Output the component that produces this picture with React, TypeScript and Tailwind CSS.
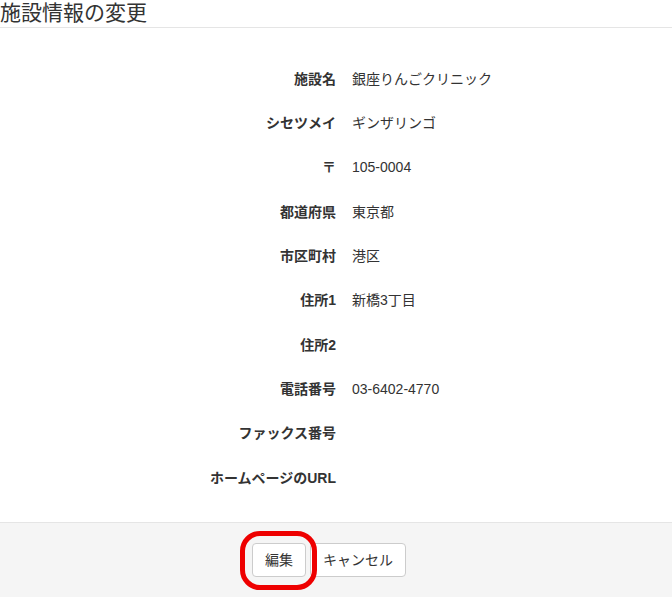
import React from "react";

const rows: { label: string; value: string }[] = [
  { label: "施設名", value: "銀座りんごクリニック" },
  { label: "シセツメイ", value: "ギンザリンゴ" },
  { label: "〒", value: "105-0004" },
  { label: "都道府県", value: "東京都" },
  { label: "市区町村", value: "港区" },
  { label: "住所1", value: "新橋3丁目" },
  { label: "住所2", value: "" },
  { label: "電話番号", value: "03-6402-4770" },
  { label: "ファックス番号", value: "" },
  { label: "ホームページのURL", value: "" },
];

export default function App() {
  return (
    <div
      className="min-h-[606px] w-[672px] bg-white text-[#333]"
      style={{ fontFamily: '"Liberation Sans", "Noto Sans CJK JP", sans-serif' }}
    >
      <h1 className="h-[28px] border-b border-[#e5e5e5] text-[21px] leading-[25px] font-normal">
        施設情報の変更
      </h1>

      <div className="pt-[29px] pb-[22px]">
        {rows.map((row) => (
          <div key={row.label} className="grid h-[44.33px] grid-cols-[336px_1fr] items-center gap-4 text-[14px]">
            <div className="text-right font-bold">{row.label}</div>
            <div>{row.value}</div>
          </div>
        ))}
      </div>

      <div className="flex h-[75px] items-center justify-center gap-[4px] border-t border-[#e5e5e5] bg-[#f5f5f5] pr-[14px]">
        <div className="relative">
          <button className="h-[34px] w-[54px] rounded border border-[#ccc] bg-white text-[14px] text-[#333]">
            編集
          </button>
          <span className="pointer-events-none absolute -top-[12px] -left-[12px] h-[59px] w-[77px] rounded-[20px] border-[5px] border-[#ee0000]" />
        </div>
        <button className="h-[34px] w-[96px] rounded border border-[#ccc] bg-white text-[14px] text-[#333]">
          キャンセル
        </button>
      </div>
    </div>
  );
}
